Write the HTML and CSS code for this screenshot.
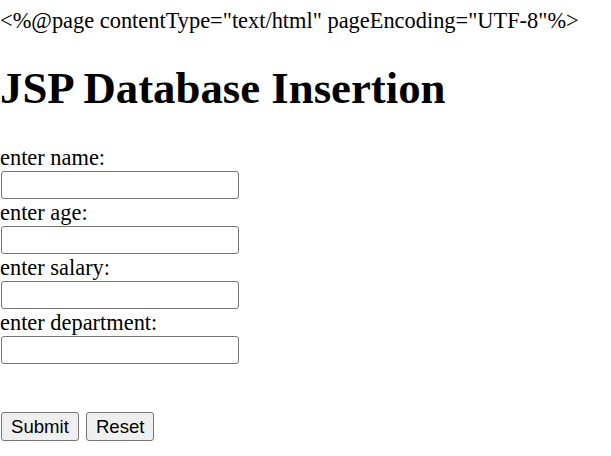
FILE: index.html
```html
<!DOCTYPE html>
<html>
<head>
<meta charset="UTF-8">
<title>JSP Database Insertion</title>
<link rel="stylesheet" href="styles.css">
</head>
<body>
<div class="directive">&lt;%@page contentType="text/html" pageEncoding="UTF-8"%&gt;</div>
<h1 class="title">JSP Database Insertion</h1>
<form class="form">
  <div class="field">
    <label class="field-label">enter name:</label>
    <input class="field-input" type="text" name="name">
  </div>
  <div class="field">
    <label class="field-label">enter age:</label>
    <input class="field-input" type="text" name="age">
  </div>
  <div class="field">
    <label class="field-label">enter salary:</label>
    <input class="field-input" type="text" name="salary">
  </div>
  <div class="field">
    <label class="field-label">enter department:</label>
    <input class="field-input" type="text" name="department">
  </div>
  <div class="actions">
    <input class="btn" type="submit" value="Submit">
    <input class="btn" type="reset" value="Reset">
  </div>
</form>
</body>
</html>
```
FILE: styles.css
```css
html, body {
  margin: 0;
  padding: 0;
  background: #fff;
}
body {
  font-family: "Liberation Serif", "Times New Roman", serif;
  font-size: 22.4px;
  color: #000;
}
.directive {
  line-height: 26px;
  padding-top: 8px;
}
.title {
  font-size: 44.8px;
  font-weight: bold;
  line-height: 52px;
  margin: 28px 0 30px 0;
}
.form {
  display: flex;
  flex-direction: column;
  align-items: flex-start;
}
.field {
  display: flex;
  flex-direction: column;
  align-items: flex-start;
}
.field-label {
  line-height: 27px;
}
.field-input {
  box-sizing: border-box;
  width: 238px;
  height: 28px;
  margin: 0 0 0 1px;
  padding: 1px 3px;
  border: 1px solid #767676;
  border-radius: 3px;
  background: #fff;
  font-family: "Liberation Sans", Arial, sans-serif;
  font-size: 18.6px;
}
.actions {
  display: flex;
  gap: 7px;
  margin-top: 48px;
  padding-left: 1px;
}
.btn {
  box-sizing: border-box;
  height: 29px;
  margin: 0;
  padding: 0 9px;
  border: 1px solid #767676;
  border-radius: 3px;
  background: #efefef;
  color: #000;
  font-family: "Liberation Sans", Arial, sans-serif;
  font-size: 18.6px;
}
```
